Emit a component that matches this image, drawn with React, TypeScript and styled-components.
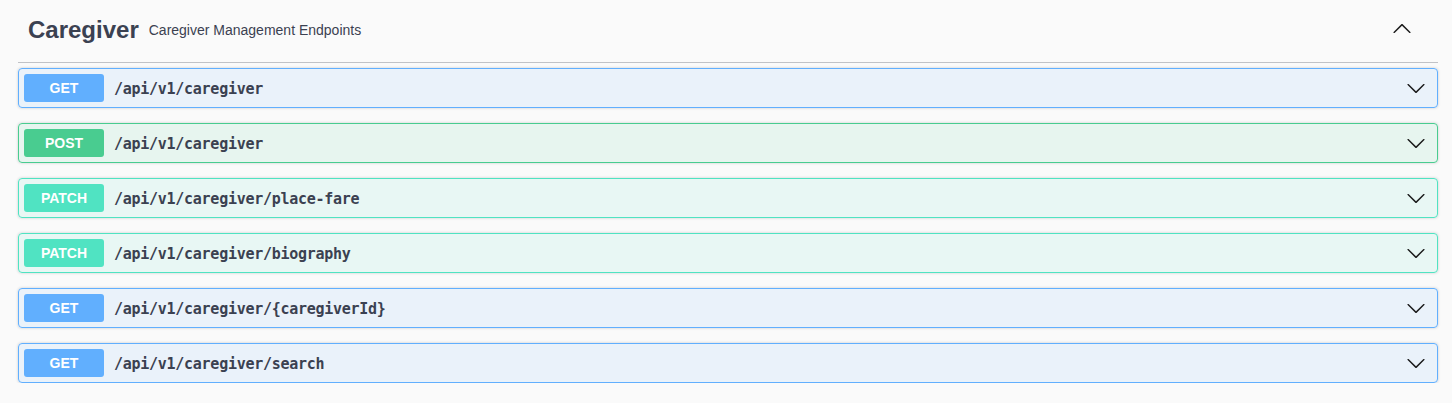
import React from 'react';
import styled, { createGlobalStyle } from 'styled-components';

const GlobalStyle = createGlobalStyle`
body {
  margin: 0;
  background: #fafafa;
  font-family: "Liberation Sans", Arial, sans-serif;
  color: #3b4151;
}
`;

type Method = 'GET' | 'POST' | 'PATCH';

const colors: Record<Method, { main: string; bg: string }> = {
  GET: { main: '#61affe', bg: 'rgba(97, 175, 254, 0.1)' },
  POST: { main: '#49cc90', bg: 'rgba(73, 204, 144, 0.1)' },
  PATCH: { main: '#50e3c2', bg: 'rgba(80, 227, 194, 0.1)' },
};

const Wrapper = styled.div`
padding: 0 14px 0 18px;
`;

const TagHeading = styled.h3`
display: flex;
align-items: center;
height: 60px;
margin: 0 0 5px;
padding: 0 20px 2px 10px;
border-bottom: 1px solid rgba(59, 65, 81, 0.3);
font-family: "Liberation Sans", Arial, sans-serif;
font-size: 24px;
font-weight: 700;
color: #3b4151;
`;

const TagDescription = styled.small`
flex: 1;
padding: 0 10px;
font-size: 14px;
font-weight: 400;
color: #3b4151;
`;

const ArrowBox = styled.span<{ $offset?: number }>`
display: flex;
width: 20px;
height: 20px;
margin-right: 6px;
margin-bottom: ${p => p.$offset ?? 0}px;

svg {
  fill: #1b1b1b;
}
`;

const OpList = styled.div`
display: flex;
flex-direction: column;
gap: 15px;
`;

const OpBlock = styled.div<{ $method: Method }>`
display: flex;
align-items: center;
padding: 5px;
border: 1px solid ${p => colors[p.$method].main};
border-radius: 4px;
background: ${p => colors[p.$method].bg};
box-shadow: 0 0 3px rgba(0, 0, 0, 0.19);
`;

const MethodBadge = styled.span<{ $method: Method }>`
display: flex;
align-items: center;
justify-content: center;
width: 80px;
height: 28px;
border-radius: 3px;
background: ${p => colors[p.$method].main};
color: #fff;
font-family: "Liberation Sans", Arial, sans-serif;
font-size: 14px;
font-weight: 700;
`;

const Path = styled.span`
flex: 1;
padding: 1px 10px 0;
font-family: "DejaVu Sans Mono", "Liberation Mono", monospace;
font-size: 15px;
font-weight: 700;
letter-spacing: -0.27px;
color: #3b4151;
`;

const ChevronDown = () => (
  <svg width="20" height="20" viewBox="0 0 20 20">
    <path d="M17.418 6.109c.272-.268.709-.268.979 0s.271.701 0 .969l-7.908 7.83c-.27.268-.707.268-.979 0l-7.908-7.83c-.27-.268-.27-.701 0-.969.271-.268.709-.268.979 0L10 13.25l7.418-7.141z" />
  </svg>
);

const ChevronUp = () => (
  <svg width="20" height="20" viewBox="0 0 20 20">
    <path d="M17.418 14.908c.272.268.709.268.979 0s.271-.701 0-.969l-7.908-7.83c-.27-.268-.707-.268-.979 0l-7.908 7.83c-.27.268-.27.701 0 .969.271.268.709.268.979 0L10 7.767l7.418 7.141z" />
  </svg>
);

const operations: { method: Method; path: string }[] = [
  { method: 'GET', path: '/api/v1/caregiver' },
  { method: 'POST', path: '/api/v1/caregiver' },
  { method: 'PATCH', path: '/api/v1/caregiver/place-fare' },
  { method: 'PATCH', path: '/api/v1/caregiver/biography' },
  { method: 'GET', path: '/api/v1/caregiver/{caregiverId}' },
  { method: 'GET', path: '/api/v1/caregiver/search' },
];

export default function App() {
  return (
    <>
      <GlobalStyle />
      <Wrapper>
        <TagHeading>
          Caregiver
          <TagDescription>Caregiver Management Endpoints</TagDescription>
          <ArrowBox $offset={4}>
            <ChevronUp />
          </ArrowBox>
        </TagHeading>
        <OpList>
          {operations.map((op, i) => (
            <OpBlock key={i} $method={op.method}>
              <MethodBadge $method={op.method}>{op.method}</MethodBadge>
              <Path>{op.path}</Path>
              <ArrowBox>
                <ChevronDown />
              </ArrowBox>
            </OpBlock>
          ))}
        </OpList>
      </Wrapper>
    </>
  );
}
